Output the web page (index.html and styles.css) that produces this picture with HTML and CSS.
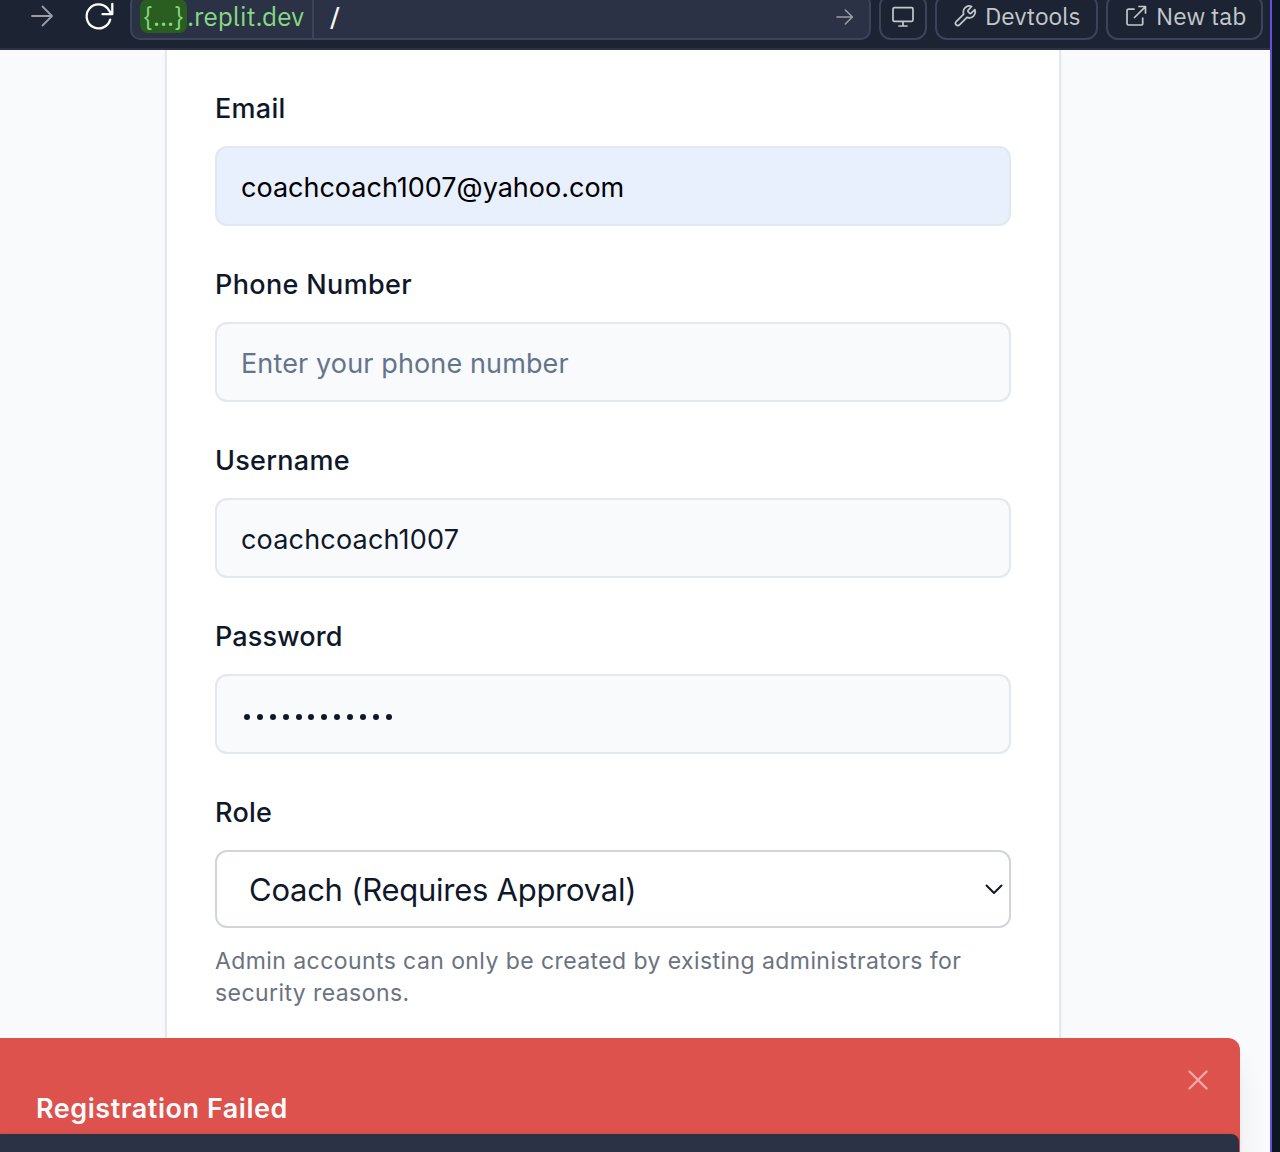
FILE: index.html
```html
<!DOCTYPE html>
<html lang="en">
<head>
<meta charset="utf-8">
<title>Register</title>
<link rel="stylesheet" href="styles.css">
</head>
<body>
<div class="pane">
  <header class="toolbar">
    <svg class="forward" width="24" height="24" viewBox="0 0 24 24"><path d="M2 12H21.5M12.5 2.5L22 12L12.5 21.5"/></svg>
    <svg class="reload" width="32" height="32" viewBox="0 0 32 32"><path d="M29.3 4V14.2H19.5M28.2 13.6L24.8 8.6A12 12 0 1 0 27.2 19.6"/></svg>
    <div class="address">
      <div class="domain"><span class="sub">{...}</span><span class="host">.replit.dev</span></div>
      <span class="path">/</span>
      <svg class="go" width="18" height="18" viewBox="0 0 18 18"><path d="M1 9H16M9.3 2L16.4 9L9.3 16"/></svg>
    </div>
    <button class="tool screen"><svg width="24" height="24" viewBox="0 0 24 24"><path d="M3.3 2.7H20.7Q22 2.7 22 4V15Q22 16.3 20.7 16.3H3.3Q2 16.3 2 15V4Q2 2.7 3.3 2.7ZM12 16.3V21M8 21H16"/></svg></button>
    <button class="tool dev"><svg width="24" height="24" viewBox="0 0 24 24"><path d="M15.2 5.2a1.2 1.2 0 0 0 0 1.7l1.3 1.3a1.2 1.2 0 0 0 1.7 0l3.6-3.6a6 6 0 0 1-7.8 7.8l-7.5 7.5a2.2 2.2 0 0 1-3.3-3.3l7.5-7.5a6 6 0 0 1 7.9-7.6Z"/></svg><span>Devtools</span></button>
    <button class="tool tab"><svg width="24" height="24" viewBox="0 0 24 24"><path d="M10 4.2H4.6Q3 4.2 3 5.8V18.4Q3 20 4.6 20H17Q18.7 20 18.7 18.4V13M15 1.5H21.5V8M21.2 1.8L10.5 12.5"/></svg><span>New tab</span></button>
  </header>
  <main class="page">
    <form class="card">
      <div class="field"><label for="email">Email</label><input id="email" class="control filled" type="text" value="coachcoach1007@yahoo.com"></div>
      <div class="field"><label class="wide" for="phone">Phone Number</label><input id="phone" class="control phone" type="text" placeholder="Enter your phone number"></div>
      <div class="field"><label for="user">Username</label><input id="user" class="control user" type="text" value="coachcoach1007"></div>
      <div class="field"><label class="tight">Password</label><div class="control dots"><i></i><i></i><i></i><i></i><i></i><i></i><i></i><i></i><i></i><i></i><i></i><i></i></div></div>
      <div class="field"><label>Role</label>
        <div class="select"><span>Coach (Requires Approval)</span><svg width="18" height="12" viewBox="0 0 18 12"><path d="M1.5 2.5L9 10L16.5 2.5"/></svg></div>
        <p class="help">Admin accounts can only be created by existing administrators for<br>security reasons.</p>
      </div>
    </form>
  </main>
  <div class="toast"><strong>Registration Failed</strong><svg width="20" height="20" viewBox="0 0 20 20"><path d="M1.5 1.5L18.5 18.5M18.5 1.5L1.5 18.5"/></svg></div>
  <div class="dock"></div>
</div>
</body>
</html>
```
FILE: styles.css
```css
* { box-sizing: border-box; }
body { margin: 0; height: 1152px; overflow: hidden; background: #0e1525; font-family: Inter, "Liberation Sans", sans-serif; }
svg { fill: none; stroke: currentColor; stroke-width: 2; stroke-linecap: round; stroke-linejoin: round; flex: none; }
.pane { position: relative; width: 1272px; height: 1152px; border-right: 2px solid #6450d4; overflow: hidden; background: #f8fafc; }
.toolbar { display: flex; align-items: flex-start; height: 50px; padding-left: 30px; background: #1c2333; border-bottom: 2px solid #2b3245; overflow: hidden; color: #c2c8cc; font-family: "IBM Plex Sans", Roboto, sans-serif; font-size: 24.3px; }
.forward { margin-top: 4px; color: #9a9ca5; stroke-width: 1.8; }
.reload { margin: 0 15px 0 29px; color: #fff; stroke-width: 2.3; }
.address { display: flex; align-items: center; width: 741px; height: 46px; margin-top: -6px; background: #2b3245; border: 2px solid #3c445c; border-radius: 10px; }
.domain { display: flex; align-items: center; width: 182px; height: 42px; padding-left: 8px; border-right: 2px solid #3c445c; color: #86d982; font-size: 26px; }
.sub { width: 47px; height: 34px; margin-top: -2px; line-height: 34px; text-align: center; background: #2a5d20; border-radius: 8px; }
.host { margin-top: -2px; line-height: 34px; }
.path { flex: 1; padding-left: 16px; margin-top: -4px; color: #f5f9fc; font-size: 25px; font-weight: 500; }
.go { margin-right: 15px; color: #9a9ca5; stroke-width: 1.6; }
.tool { display: flex; align-items: center; height: 46px; margin: -6px 0 0 8px; padding: 0 0 0 16px; background: #1c2333; border: 2px solid #3c445c; border-radius: 12px; color: inherit; font: inherit; white-space: nowrap; }
.tool svg { stroke-width: 1.7; }
.screen { width: 48px; padding-left: 10px; }
.dev { width: 163px; }
.tool span { margin: -2px 0 0 8px; }
.tab { width: 157px; }
.page { display: flex; height: 1102px; padding-left: 165px; }
.card { width: 896px; height: 1102px; padding: 45px 48px 0; background: #fff; border: solid #e2e8f0; border-width: 0 2px; box-shadow: 0 2px 4px #00000009; }
.field { margin-bottom: 45px; }
label { display: block; height: 28px; margin-bottom: 23px; color: #0f172a; font-size: 27px; font-weight: 500; line-height: 28px; letter-spacing: .28px; }
.wide { letter-spacing: .35px; }
.tight { letter-spacing: .15px; }
.control { display: block; width: 100%; height: 80px; padding: 2px 24px 0; background: #f8fafc; border: 2px solid #e2e8f0; border-radius: 12px; outline: 0; color: #0f172a; font: 400 27px Inter, sans-serif; }
.filled { background: #e8f0fe; color: #000; }
.phone { letter-spacing: .13px; }
.user { letter-spacing: .18px; }
.phone::placeholder { color: #64748b; opacity: 1; }
.dots { display: flex; align-items: center; gap: 6.9px; padding: 5px 0 0 27px; }
.dots i { width: 6px; height: 6px; border-radius: 50%; background: #0f172a; }
.select { display: flex; align-items: center; justify-content: space-between; height: 78px; padding: 0 6px 0 32px; background: #fff; border: 2px solid #d1d5db; border-radius: 12px; color: #0f172a; font-size: 31px; letter-spacing: -.26px; }
.help { margin: 17px 0 0; color: #6b7280; font-size: 23px; line-height: 32px; letter-spacing: .42px; white-space: nowrap; }
.toast { position: absolute; left: 0; top: 1038px; display: flex; justify-content: space-between; width: 1240px; height: 130px; padding: 32px 32px 0 36px; background: #dd524c; border-radius: 0 12px 12px 0; box-shadow: 0 20px 30px -6px #0000001a, 0 8px 12px -8px #0000001a; color: #f8fafc; }
.toast strong { margin-top: 25px; font-size: 27px; font-weight: 600; line-height: 28px; letter-spacing: .54px; }
.toast svg { color: #f1a9a7; stroke-width: 2.3; }
.dock { position: absolute; left: 0; top: 1134px; width: 1239px; height: 18px; background: #2b3245; border-radius: 0 8px 0 0; box-shadow: 0 0 5px #00000012; }
```
